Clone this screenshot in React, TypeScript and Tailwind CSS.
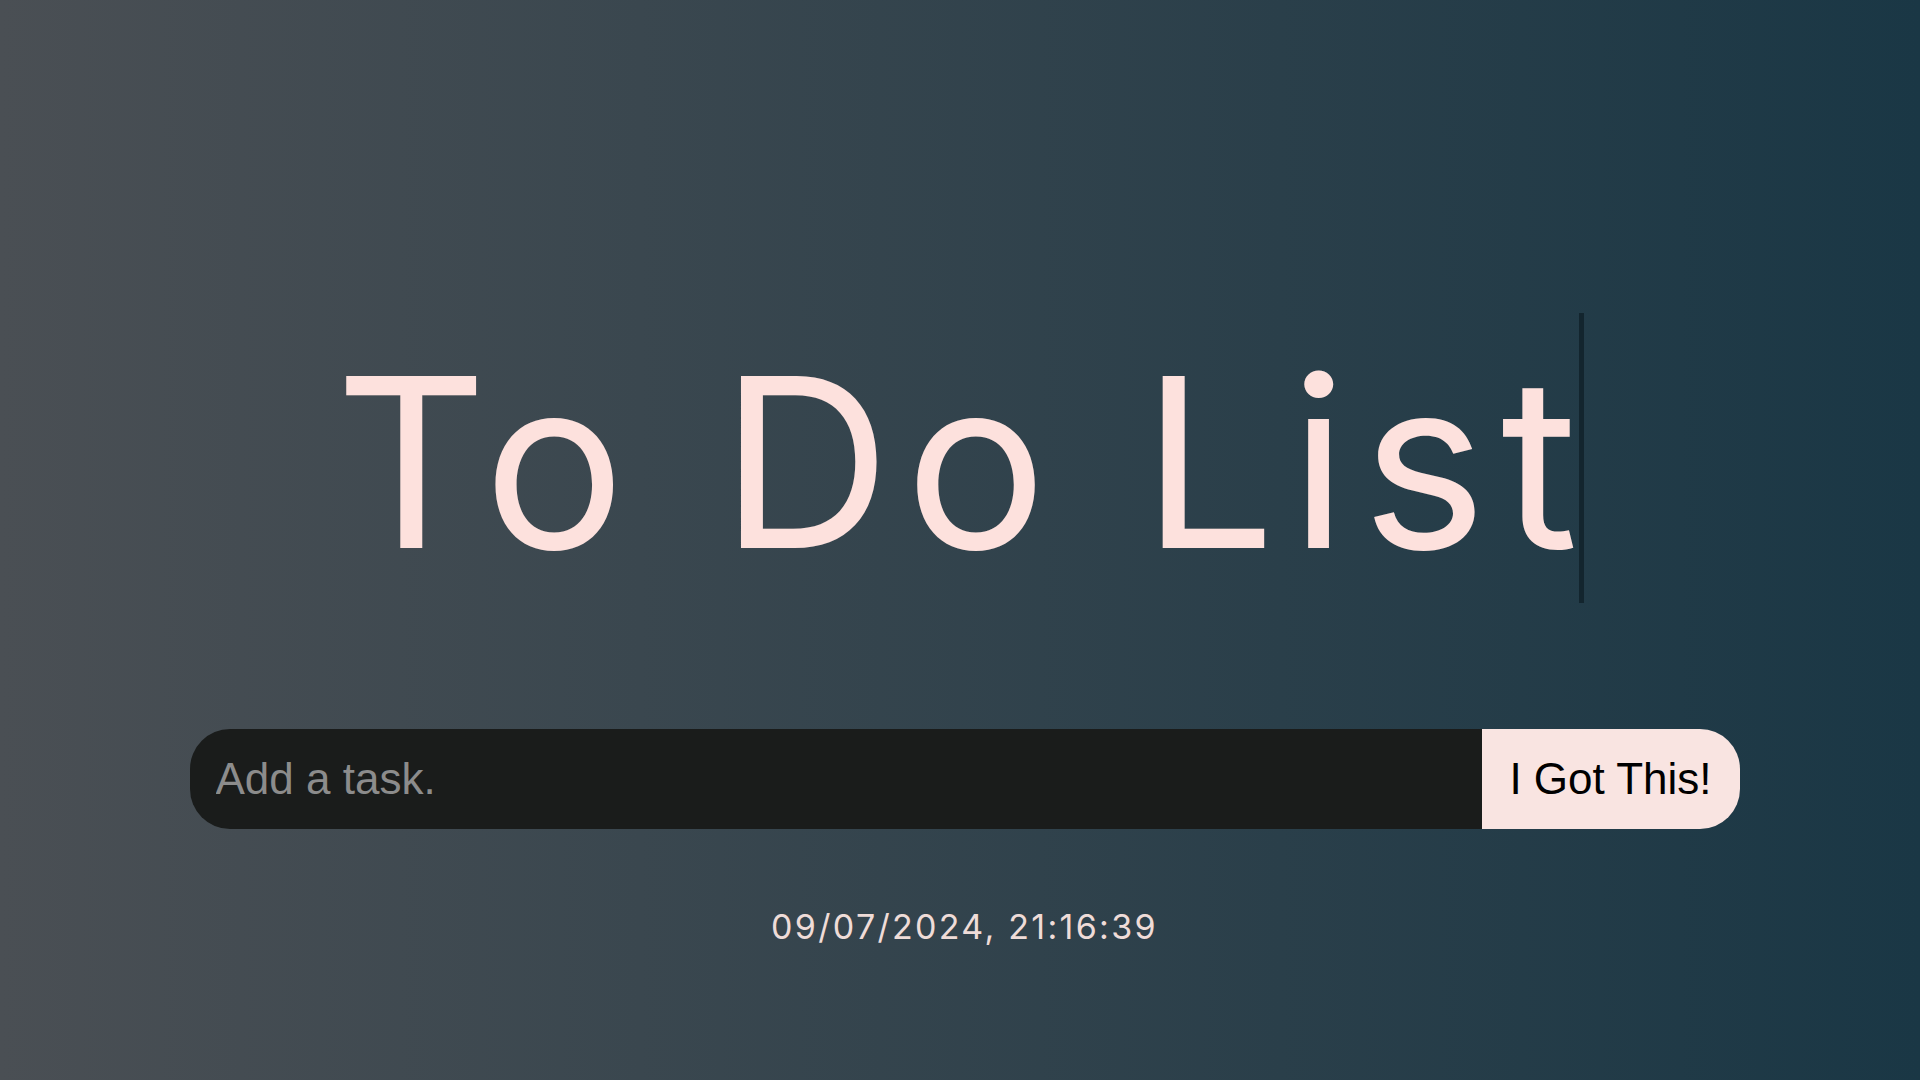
export default function App() {
  return (
    <div className="min-h-screen w-full bg-[linear-gradient(to_right,#4a4f54,#1a3745)] flex flex-col items-center pt-[313px] pl-[9px]">
      <h1 className="inline-block mr-[10px] border-r-[5px] border-[#13252e] pt-[9px] pr-[1px] font-['Inter',sans-serif] text-[236px] leading-[281px] font-normal tracking-[14.5px] text-[#fde1dd] whitespace-nowrap">
        To Do Lis<span className="tracking-normal">t</span>
      </h1>

      <div className="mt-[126px] flex w-[1550px] h-[100px] rounded-[40px] overflow-hidden">
        <input
          type="text"
          placeholder="Add a task."
          className="flex-1 bg-[#1a1c1b] pl-[26px] text-[44px] font-['Liberation_Sans',Arial,sans-serif] text-white placeholder:text-[#8c8c8c] outline-none"
        />
        <button className="w-[258px] bg-[#f9e4e1] text-[44px] font-['Liberation_Sans',Arial,sans-serif] text-black">
          I Got This!
        </button>
      </div>

      <p className="mt-[72px] font-['Inter',sans-serif] text-[34px] tracking-[2.3px] text-[#efdcd8]">
        09/07/2024, 21:16:39
      </p>
    </div>
  );
}
